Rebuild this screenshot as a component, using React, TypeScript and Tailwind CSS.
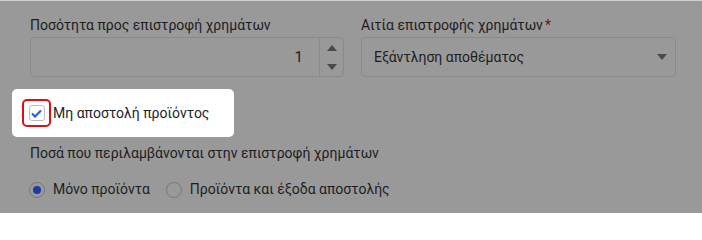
function Caret({ up = false }: { up?: boolean }) {
  return (
    <svg width="10" height="6" viewBox="0 0 10 6" className={up ? 'rotate-180' : ''}>
      <path d="M0 0h10L5 6z" fill="#4a4a4a" />
    </svg>
  )
}

export default function App() {
  return (
    <div
      className="h-[213px] w-[702px] overflow-hidden border-t border-t-[#cfcfcf] bg-[#999999] text-[14px] text-[#1e1e1e]"
      style={{ fontFamily: 'Roboto, "Noto Sans", sans-serif' }}
    >
      <div className="flex gap-[17px] pl-[30px] pt-[12px]">
        <div className="w-[314px] shrink-0">
          <div className="h-[24px] leading-[24px]">Ποσότητα προς επιστροφή χρημάτων</div>
          <div className="flex h-[40px] rounded-[4px] border border-[#8a8a8a]">
            <div className="flex flex-1 items-center justify-end pr-[16px] text-[15px]">1</div>
            <div className="flex w-[24px] flex-col border-l border-[#8a8a8a]">
              <div className="flex flex-1 items-center justify-center">
                <Caret up />
              </div>
              <div className="flex flex-1 items-center justify-center">
                <Caret />
              </div>
            </div>
          </div>
        </div>
        <div className="w-[315px] shrink-0">
          <div className="h-[24px] leading-[24px]">
            Αιτία επιστροφής χρημάτων<span className="ml-[2px] text-[#7a0d0d]">*</span>
          </div>
          <div className="flex h-[40px] items-center justify-between rounded-[4px] border border-[#8a8a8a] pl-[12px] pr-[8px]">
            <span>Εξάντληση αποθέματος</span>
            <Caret />
          </div>
        </div>
      </div>

      <div className="ml-[12px] mt-[12px] flex h-[48px] w-[222px] items-center rounded-[5px] bg-white pl-[10px] text-[#212529]">
        <div className="flex h-[28px] w-[29px] items-center justify-center rounded-[5px] border-2 border-[#e01010]">
          <div className="flex h-[16px] w-[16px] items-center justify-center rounded-[3px] border border-[#b8bccc] bg-white">
            <svg width="11" height="9" viewBox="0 0 11 9">
              <path d="M1 4.5l3 3L10 1.5" fill="none" stroke="#2f5be8" strokeWidth="2.2" />
            </svg>
          </div>
        </div>
        <span className="ml-[2px]">Μη αποστολή προϊόντος</span>
      </div>

      <div className="mt-[4px] px-[30px] leading-[24px]">Ποσά που περιλαμβάνονται στην επιστροφή χρημάτων</div>

      <div className="mt-[14px] flex items-center px-[29px]">
        <div className="flex h-[16px] w-[16px] items-center justify-center rounded-full border border-[#7a7a7a]">
          <div className="h-[8px] w-[8px] rounded-full bg-[#1c3aa6]" />
        </div>
        <span className="ml-[8px]">Μόνο προϊόντα</span>
        <div className="ml-[16px] h-[16px] w-[16px] rounded-full border border-[#7a7a7a]" />
        <span className="ml-[8px]">Προϊόντα και έξοδα αποστολής</span>
      </div>
    </div>
  )
}
